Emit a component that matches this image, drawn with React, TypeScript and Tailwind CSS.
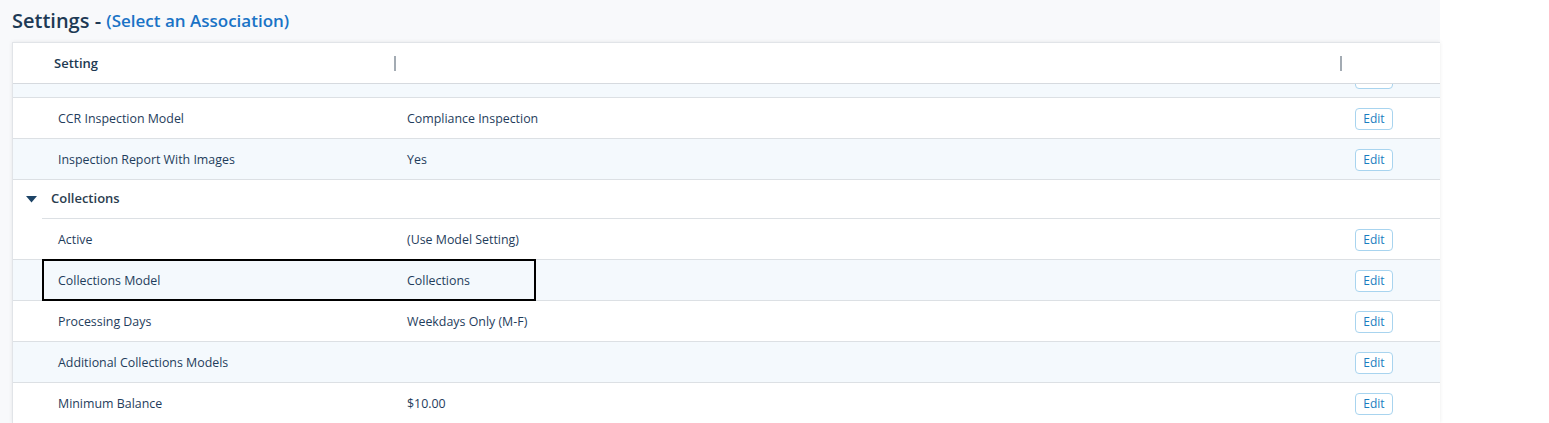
const rows: { label: string; value: string; shade: boolean; outlined?: boolean }[] = [
  { label: "Active", value: "(Use Model Setting)", shade: false },
  { label: "Collections Model", value: "Collections", shade: true, outlined: true },
  { label: "Processing Days", value: "Weekdays Only (M-F)", shade: false },
  { label: "Additional Collections Models", value: "", shade: true },
  { label: "Minimum Balance", value: "$10.00", shade: false },
];

function EditButton({ hidden }: { hidden?: boolean }) {
  return (
    <button className="flex h-[22px] w-[38px] items-center justify-center rounded-[4px] border border-[#a8d4ef] bg-white text-[12px] text-[#1a7dc0]">
      {hidden ? "" : "Edit"}
    </button>
  );
}

function Row({
  label,
  value,
  shade,
  outlined,
  partial,
}: {
  label: string;
  value: string;
  shade: boolean;
  outlined?: boolean;
  partial?: boolean;
}) {
  return (
    <div
      className={`relative flex h-[41px] shrink-0 items-center border-b border-[#dce0e4] text-[12.4px] text-[#1f3d5c] ${
        shade ? "bg-[#f4f9fd]" : "bg-white"
      }`}
    >
      <div className="w-[394px] pl-[45px] pt-[2px]">{label}</div>
      <div className="flex-1 pt-[2px]">{value}</div>
      <div className="w-[85px] pt-[1px]">
        <EditButton hidden={partial} />
      </div>
      {outlined && (
        <div className="pointer-events-none absolute left-[29px] top-[-1px] h-[42px] w-[494px] border-2 border-black" />
      )}
    </div>
  );
}

export default function App() {
  return (
    <div
      className="flex h-[423px] w-[1549px] overflow-hidden bg-white"
      style={{ fontFamily: '"Open Sans", "Noto Sans", sans-serif' }}
    >
      <div className="flex w-[1440px] flex-col bg-[#f8f9fb]">
        {/* ── Title ── */}
        <h1 className="flex h-[42px] items-center pl-[12px] font-semibold text-[#1d3a55]">
          <span className="text-[20px]">Settings -&nbsp;</span>
          <span className="text-[17px] text-[#1a73c6]">(Select an Association)</span>
        </h1>

        {/* ── Table panel ── */}
        <div className="ml-[12px] flex flex-1 flex-col overflow-hidden border-l border-t border-[#e1e4e8] bg-white shadow-[0_0_4px_rgba(0,0,0,0.08)]">
          <div className="flex h-[41px] shrink-0 items-center border-b border-[#d6dadf] text-[13px] font-semibold text-[#1e3a52]">
            <div className="flex w-[394px] items-center justify-between pl-[41px] pr-[11px] pt-[1px]">
              <span>Setting</span>
              <span className="h-[15px] w-[2px] bg-[#a3abb3]" />
            </div>
            <div className="flex flex-1 items-center justify-end pr-[98px] pt-[1px]">
              <span className="h-[15px] w-[2px] bg-[#a3abb3]" />
            </div>
          </div>

          {/* scrolled-off row */}
          <div className="flex h-[14px] shrink-0 flex-col justify-end overflow-hidden">
            <Row label="" value="" shade={true} partial />
          </div>

          <Row label="CCR Inspection Model" value="Compliance Inspection" shade={false} />
          <Row label="Inspection Report With Images" value="Yes" shade={true} />

          {/* ── Group: Collections ── */}
          <div className="flex h-[38px] shrink-0 items-center bg-white text-[13px] font-semibold text-[#2b3d4f]">
            <svg width="11" height="7" viewBox="0 0 11 7" className="ml-[13px] mr-[14px]">
              <path d="M0 0h11L5.5 6.5z" fill="#1d4466" />
            </svg>
            Collections
          </div>
          <div className="ml-[29px] shrink-0 border-t border-[#dce0e4]" />

          {rows.map((r) => (
            <Row key={r.label} {...r} />
          ))}
        </div>
      </div>
    </div>
  );
}
